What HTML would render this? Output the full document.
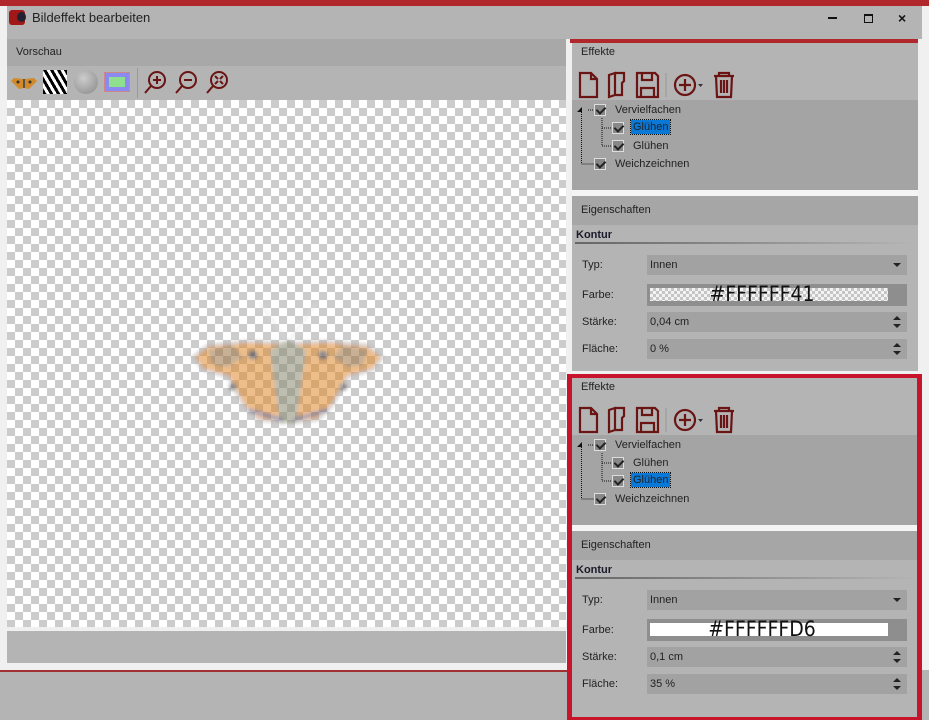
<!DOCTYPE html>
<html><head><meta charset="utf-8"><style>
*{margin:0;padding:0;box-sizing:border-box}
body{width:929px;height:720px;overflow:hidden;background:#f0f0f0;font-family:"Liberation Sans",sans-serif;font-size:11px;color:#222;position:relative}
.a{position:absolute}
.chk{background-color:#fff;background-image:linear-gradient(45deg,#ccc 25%,transparent 25%,transparent 75%,#ccc 75%),linear-gradient(45deg,#ccc 25%,transparent 25%,transparent 75%,#ccc 75%);background-size:16px 16px;background-position:0 0,8px 8px}
.cb{position:absolute;width:12px;height:12px;border:1px solid #ddd;background:#888}
.cb::after{content:"";position:absolute;left:3px;top:0px;width:4px;height:7px;border:solid #222;border-width:0 2px 2px 0;transform:rotate(45deg)}
.box{position:absolute;left:75px;width:260px;height:20px;background:#a2a2a2;padding:4px 3px;font-size:11px}
.arr{position:absolute;right:6px;top:8px;width:0;height:0;border-left:4px solid transparent;border-right:4px solid transparent;border-top:4px solid #222}
.spin{position:absolute;right:6px;top:4px;width:8px;height:12px}
.spin::before{content:"";position:absolute;top:0;left:0;border-left:4px solid transparent;border-right:4px solid transparent;border-bottom:4px solid #222}
.spin::after{content:"";position:absolute;bottom:0;left:0;border-left:4px solid transparent;border-right:4px solid transparent;border-top:4px solid #222}
.lbl{position:absolute;left:10px}
</style></head><body>
<div class="a" style="left:0;top:0;width:929px;height:6px;background:#b0282c"></div>
<div class="a" style="left:7px;top:6px;width:915px;height:33px;background:#b4b4b4"></div>
<div class="a" style="left:9px;top:10px;width:16px;height:15px;background:#a01818;border-radius:3px"></div>
<div class="a" style="left:17px;top:12px;width:9px;height:10px;background:#223;border-radius:50%"></div>
<div class="a" style="left:32px;top:10px;font-size:13px;color:#222">Bildeffekt bearbeiten</div>
<div class="a" style="left:828px;top:17px;width:9px;height:2px;background:#111"></div>
<div class="a" style="left:864px;top:14px;width:9px;height:9px;border:1.5px solid #111;border-top-width:2.5px"></div>
<div class="a" style="left:898px;top:10px;font-size:14px;color:#111;font-weight:bold">×</div>
<!-- left panel -->
<div class="a" style="left:7px;top:39px;width:559px;height:27px;background:#a8a8a8"></div>
<div class="a" style="left:16px;top:46px;color:#222">Vorschau</div>
<div class="a" style="left:7px;top:66px;width:559px;height:34px;background:#b4b4b4"></div>
<svg class="a" style="left:11px;top:76px" width="26" height="14" viewBox="0 0 26 14"><path d="M13 3L3 2 0 5 4 9 8 13 13 12 18 13 22 9 26 5 23 2Z" fill="#d28a2a"/><circle cx="7" cy="6" r="1.5" fill="#333"/><circle cx="19" cy="6" r="1.5" fill="#333"/><path d="M13 3v9" stroke="#555" stroke-width="2"/></svg>
<div class="a" style="left:43px;top:70px;width:24px;height:24px;background:repeating-linear-gradient(60deg,#000 0 3px,#fff 3px 6px)"></div>
<div class="a" style="left:74px;top:70px;width:24px;height:24px;border-radius:50%;background:radial-gradient(circle at 40% 35%,#ccc,#888)"></div>
<div class="a" style="left:105px;top:73px;width:24px;height:18px;background:#8ee08e;border:4px solid #8a8af0;outline:1px solid #c88"></div>
<div class="a" style="left:137px;top:68px;width:1px;height:30px;background:#999"></div>
<svg class="a" style="left:143px;top:70px" width="90" height="26" viewBox="0 0 90 26" fill="none" stroke="#6a1414" stroke-width="2">
<circle cx="14" cy="10" r="8"/><path d="M8 16L2 23M10 10h8M14 6v8"/>
<circle cx="45" cy="10" r="8"/><path d="M39 16L33 23M41 10h8"/>
<circle cx="76" cy="10" r="8"/><path d="M70 16L64 23M72 6l3 3M80 6l-3 3M72 14l3-3M80 14l-3-3"/>
</svg>
<div class="a chk" style="left:7px;top:100px;width:559px;height:527px"></div>
<svg class="a" style="left:188px;top:295px" width="200" height="135" viewBox="0 0 200 135">
<defs><filter id="bl"><feGaussianBlur stdDeviation="1.5"/></filter></defs>
<g opacity="0.55" filter="url(#bl)">
<path d="M100 48L60 46 20 50 5 62 15 75 40 82 55 110 70 125 95 128 100 80 105 128 130 125 145 110 160 82 185 75 195 62 180 50 140 46Z" fill="#e08a2a" stroke="#bbb" stroke-width="3"/>
<path d="M100 45L82 55 92 128 108 128 118 55Z" fill="#8a8a70"/>
<path d="M20 55L45 50 55 62 40 72 25 70Z" fill="#555" opacity=".5"/>
<path d="M180 55L155 50 145 62 160 72 175 70Z" fill="#555" opacity=".5"/>
<circle cx="65" cy="60" r="5" fill="#333"/><circle cx="135" cy="60" r="5" fill="#333"/><circle cx="45" cy="92" r="4" fill="#555"/><circle cx="155" cy="92" r="4" fill="#555"/>
<path d="M60 115L95 125M140 115L105 125" stroke="#557" stroke-width="4"/>
<path d="M98 45L72 8M102 45L128 8" stroke="#ddd" stroke-width="2"/></g></svg>
<div class="a" style="left:7px;top:631px;width:559px;height:32px;background:#b4b4b4"></div>
<div class="a" style="left:0;top:670px;width:929px;height:50px;background:#b4b4b4"></div>
<div class="a" style="left:0;top:670px;width:567px;height:2px;background:#a23030"></div>
<!-- right panels -->
<div class="a" style="left:570px;top:39px;width:348px;height:4px;background:#b0282c"></div>
<div id="p1" class="a" style="left:572px;top:43px;width:346px;height:328px;background:#b4b4b4"></div>
<div class="a" style="left:567px;top:374px;width:355px;height:346px;border:5px solid #c8142a;border-bottom-width:3px;background:#b4b4b4"></div>
<div id="p2" class="a" style="left:572px;top:378px;width:345px;height:337px;background:#b4b4b4"></div>
<script>
function fill(id,sel,color,stk,fl){
var p=document.getElementById(id);
p.innerHTML=`
<div class="a" style="left:9px;top:3px">Effekte</div>
<svg class="a" style="left:5px;top:28px" width="160" height="28" viewBox="0 0 160 28" fill="none" stroke="#6a1414" stroke-width="2.2">
<path d="M3 2h11l6 6v18H3Z M14 2v6h6"/>
<path d="M32 4l6-2v22l-6 2Z M38 2h9v8l-2 2v12h-7"/>
<path d="M60 2h18l3 3v21H60Z M65 2v7h10V2 M64 26v-9h13v9"/>
<path d="M89 2v24" stroke="#999" stroke-width="1"/>
<circle cx="108" cy="14" r="10"/><path d="M102 14h12M108 8v12"/>
<path d="M121 13h5l-2.5 3Z" fill="#333" stroke="none"/>
<path d="M137 5h20M142 5V2h10v3M139 5l1 21h14l1-21M144 9v13M147 9v13M150 9v13"/>
</svg>
<div class="a" style="left:0;top:57px;width:100%;height:90px;background:#a4a4a4">
<svg class="a" style="left:0;top:0" width="60" height="80" fill="none" stroke="#111" stroke-dasharray="1 1">
<path d="M9.5 10v54h16M16 10h8M30 18v28M30 28h10M30 46h10"/></svg>
<div class="a" style="left:5px;top:7px;border-left:5px solid transparent;border-bottom:5px solid #111"></div>
<div class="cb" style="left:22px;top:4px"></div><div class="a" style="left:43px;top:4px">Vervielfachen</div>
<div class="cb" style="left:40px;top:22px"></div><div class="a" style="left:${sel==1?59:61}px;top:20px;${sel==1?'background:#0a78d7;outline:1px dotted #111;padding:1px 2px;':'padding-top:2px;'}">Glühen</div>
<div class="cb" style="left:40px;top:40px"></div><div class="a" style="left:${sel==2?59:61}px;top:38px;${sel==2?'background:#0a78d7;outline:1px dotted #111;padding:1px 2px;':'padding-top:2px;'}">Glühen</div>
<div class="cb" style="left:22px;top:58px"></div><div class="a" style="left:43px;top:58px">Weichzeichnen</div>
</div>
<div class="a" style="left:0;top:147px;width:100%;height:6px;background:#f4f4f4"></div>
<div class="a" style="left:0;top:153px;width:100%;height:29px;background:#a6a6a6"></div>
<div class="a" style="left:9px;top:161px">Eigenschaften</div>
<div class="a" style="left:4px;top:186px;font-weight:bold;color:#1a1a2a">Kontur</div>
<div class="a" style="left:3px;top:199px;width:340px;height:2px;background:linear-gradient(90deg,#666,#b4b4b4)"></div>
<div class="lbl" style="top:216px">Typ:</div><div class="box" style="top:212px">Innen<div class="arr"></div></div>
<div class="lbl" style="top:246px">Farbe:</div>
<div class="box" style="top:241px;height:22px;background:#8e8e8e;padding:0"><div class="a ${color=='41'?'chk':''}" style="left:3px;top:4px;width:238px;height:13px;${color=='41'?'background-size:6px 6px;background-position:0 0,3px 3px;opacity:.9':'background:#fff'}"></div>
<div class="a" style="left:0;width:230px;top:-2px;text-align:center;font-size:21px;color:#111;font-family:'Liberation Sans Narrow','DejaVu Sans Condensed',sans-serif">#FFFFFF${color}</div></div>
<div class="lbl" style="top:273px">Stärke:</div><div class="box" style="top:269px">${stk}<div class="spin"></div></div>
<div class="lbl" style="top:300px">Fläche:</div><div class="box" style="top:296px">${fl}<div class="spin"></div></div>
`;}
fill('p1',1,'41','0,04 cm','0 %');
fill('p2',2,'D6','0,1 cm','35 %');
</script>
</body></html>
